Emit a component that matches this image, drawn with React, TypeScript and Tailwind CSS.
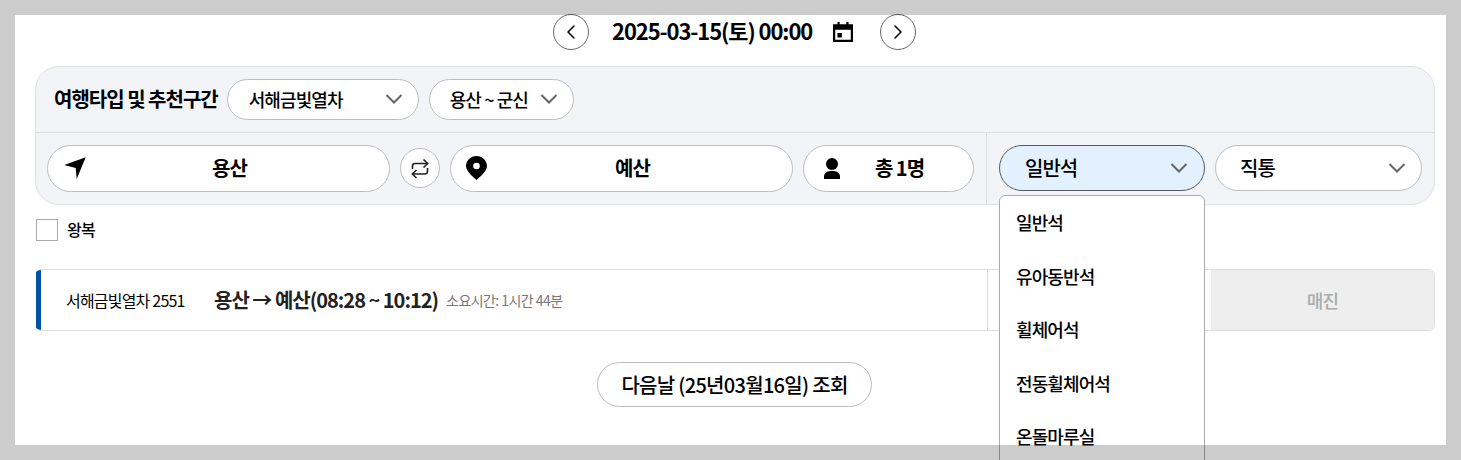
import { ChevronLeft, ChevronRight } from "lucide-react";

const seatTypes = ["일반석", "유아동반석", "휠체어석", "전동휠체어석", "온돌마루실"];

function SelectPill({ label, className, active = false }: any) {
  return (
    <div
      className={`flex items-center justify-between rounded-full border tracking-[-0.05em] ${
        active ? "border-[#555c66] bg-[#e3f1ff]" : "border-[#bdbdbd] bg-white"
      } ${className}`}
    >
      <span className="text-black">{label}</span>
      <svg className="h-6 w-6" viewBox="0 0 24 24" fill="none" stroke="#666" strokeWidth={2}>
        <path d="M4.500 8 12 15.500 19.500 8" />
      </svg>
    </div>
  );
}

function CircleButton({ children }: any) {
  return (
    <div className="flex h-9 w-9 shrink-0 items-center justify-center rounded-full border border-[#666] bg-white">
      {children}
    </div>
  );
}

function RoutePill({ icon, label, className }: any) {
  return (
    <div
      className={`relative flex h-[47px] shrink-0 items-center justify-center rounded-full border border-[#bdbdbd] bg-white pl-[22px] text-[20px] font-bold tracking-[-0.05em] text-black ${className}`}
    >
      <span className="absolute left-[15px] top-[10px]">{icon}</span>
      {label}
    </div>
  );
}

export default function App() {
  return (
    <div
      className="relative h-[460px] w-[1461px] overflow-hidden bg-white text-black"
      style={{ fontFamily: '"Noto Sans CJK KR", "Noto Sans", sans-serif' }}
    >
      <div className="pl-[35px] pr-[26px] pt-[14px]">
        {/* date */}
        <div className="flex h-9 items-center pl-[518px]">
          <CircleButton>
            <ChevronLeft className="h-6 w-6" strokeWidth={1.5} />
          </CircleButton>
          <span className="ml-[23px] w-[200px] whitespace-nowrap pb-[5px] text-[22px] font-bold leading-none tracking-[-0.05em]">
            2025-03-15(토) 00:00
          </span>
          <svg className="ml-[21px] h-5 w-5" viewBox="3 2 18 18">
            <path d="M3 4h4V2h2v2h6V2h2v2h4v16H3V4zm2 5v9h14V9H5zm2 3h4v4H7v-4z" fill="#000" fillRule="evenodd" />
          </svg>
          <div className="ml-[27px]">
            <CircleButton>
              <ChevronRight className="h-6 w-6" strokeWidth={1.5} />
            </CircleButton>
          </div>
        </div>

        {/* search panel */}
        <div className="mt-[16px] h-[139px] rounded-[24px] border border-[#dfe1e6] bg-[#f2f4f8]">
          <div className="flex h-[66px] items-center border-b border-[#dcdee3] pl-[18px] pb-[1px]">
            <span className="text-[20px] font-bold tracking-[-0.05em]">여행타입 및 추천구간</span>
            <SelectPill
              label="서해금빛열차"
              className="ml-[9px] h-[41px] w-[192px] pl-[21px] pr-[12px] text-[18px] font-medium"
            />
            <SelectPill
              label="용산 ~ 군신"
              className="ml-[10px] h-[41px] w-[145px] pl-[20px] pr-[12px] text-[18px] font-medium"
            />
          </div>
          <div className="flex h-[71px]">
            <div className="flex w-[951px] items-center border-r border-[#dcdee3] pl-[11px] pb-[1px]">
              <RoutePill
                className="w-[343px]"
                label="용산"
                icon={
                  <svg className="h-6 w-6" viewBox="0 0 24 24">
                    <path d="M22.700 1.300 1.300 9l11.400 3 1 11z" fill="#000" />
                  </svg>
                }
              />
              <div className="ml-[10px] flex h-10 w-10 shrink-0 items-center justify-center rounded-full border border-[#bdbdbd] bg-white">
                <svg className="h-[21px] w-5" viewBox="0 0 20 21" fill="none" stroke="#222" strokeWidth={1.6}>
                  <path d="M2.500 11V8Q2.500 5.500 5 5.500H17.500" />
                  <path d="M13.500 1.500 17.700 5.500 13.500 9.500" />
                  <path d="M17.500 10V13Q17.500 16 15 16H2.500" />
                  <path d="M6.500 12 2.300 16 6.500 20" />
                </svg>
              </div>
              <RoutePill
                className="ml-[10px] w-[343px]"
                label="예산"
                icon={
                  <svg className="h-6 w-[21px]" viewBox="0 0 21 24">
                    <path
                      d="M10.500 0C4.700 0 0 4.600 0 10.300 0 16 10.500 24 10.500 24S21 16 21 10.300C21 4.600 16.300 0 10.500 0zm0 13.300a3.300 3.300 0 1 1 0-6.600 3.300 3.300 0 0 1 0 6.600z"
                      fill="#000"
                    />
                  </svg>
                }
              />
              <RoutePill
                className="ml-[10px] w-[171px] pl-[22px]"
                label="총 1명"
                icon={
                  <svg className="h-6 w-6" viewBox="0 0 24 24">
                    <circle cx="13" cy="8" r="6" fill="#000" />
                    <path d="M5 23v-2.500C5 17 8 15 13 15s8 2 8 5.500V23z" fill="#000" />
                  </svg>
                }
              />
            </div>
            <div className="flex flex-1 items-start gap-[10px] pl-[12px] pt-[12px]">
              <SelectPill
                active
                label="일반석"
                className="h-[46px] w-[206px] pl-[25px] pr-[13px] text-[20px] font-medium"
              />
              <SelectPill
                label="직통"
                className="h-[46px] w-[207px] pl-[24px] pr-[12px] text-[20px] font-medium"
              />
            </div>
          </div>
        </div>

        {/* round trip */}
        <div className="mt-[13px] flex h-6 items-center pl-[1px]">
          <div className="h-[22px] w-[22px] border border-[#aaa] bg-white" />
          <span className="ml-[9px] pb-[2px] text-[16px] font-medium tracking-[-0.05em]">왕복</span>
        </div>

        {/* train row */}
        <div className="mt-[27px] flex h-[62px] items-stretch overflow-hidden rounded-[6px] border border-[#dddddd] border-l-0 pl-[1px]">
          <div className="flex flex-1 items-center border-l-[5px] border-[#0054a6] pl-[25px]">
            <span className="w-[148px] whitespace-nowrap text-[16px] tracking-[-0.05em]">서해금빛열차 2551</span>
            <span className="whitespace-nowrap text-[20px] font-bold tracking-[-0.05em] text-[#222]">
              용산 → 예산(08:28 ~ 10:12)
            </span>
            <span className="ml-[8px] whitespace-nowrap text-[14px] tracking-[-0.04em] text-[#777]">
              소요시간: 1시간 44분
            </span>
          </div>
          <div className="w-[224px] border-l border-[#dddddd]" />
          <div className="flex w-[223px] items-center justify-center bg-[#eeeeee] text-[18px] font-medium tracking-[-0.05em] text-[#aaaaaa]">
            매진
          </div>
        </div>

        {/* next day */}
        <div className="mt-[31px] flex justify-center pr-[1px]">
          <div className="flex h-[45px] w-[275px] items-center justify-center rounded-full border border-[#bdbdbd] bg-white text-[20px] font-medium tracking-[-0.035em]">
            다음날 (25년03월16일) 조회
          </div>
        </div>
      </div>

      {/* seat dropdown */}
      <div className="absolute left-[999px] top-[195px] w-[206px] rounded-[6px] border border-[#aaaaaa] bg-white pl-[16px] pb-[30px]">
        {seatTypes.map((seat) => (
          <div key={seat} className="flex h-[53.500px] items-center text-[18px] font-medium tracking-[-0.05em]">
            {seat}
          </div>
        ))}
      </div>

      {/* outer frame */}
      <div className="pointer-events-none absolute inset-0 border-[15px] border-black/20" />
    </div>
  );
}
